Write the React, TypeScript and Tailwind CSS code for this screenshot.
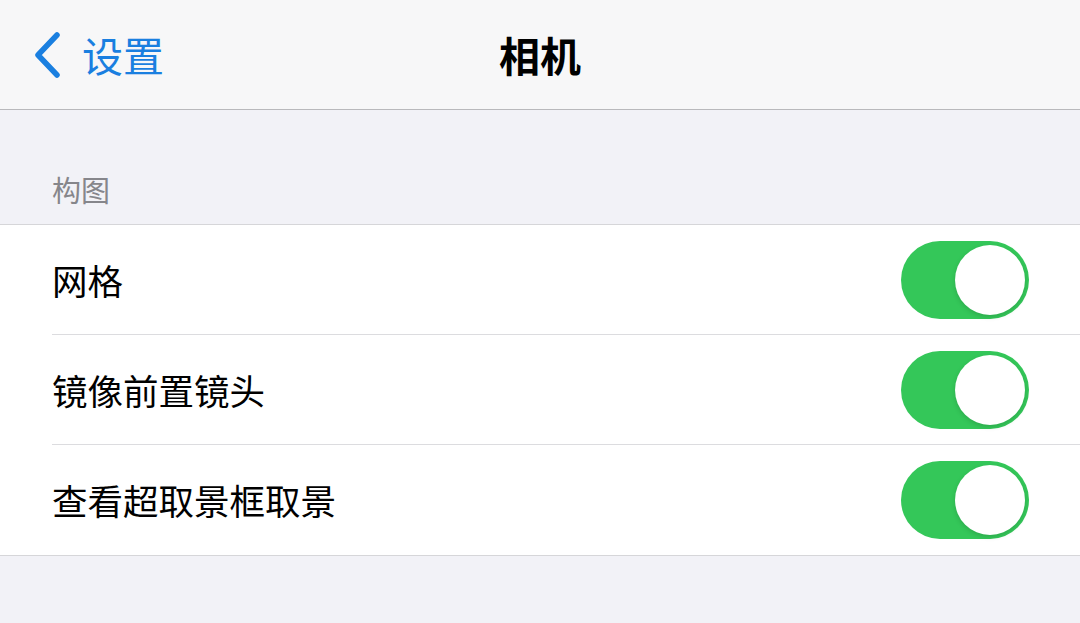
import React from 'react';

const Toggle = () => (
  <div className="w-[128px] h-[78px] rounded-full bg-[#34c759] p-[4px] flex justify-end items-center">
    <div className="w-[70px] h-[70px] rounded-full bg-white shadow-[0_2px_5px_rgba(0,0,0,0.15)]" />
  </div>
);

const rows = ['网格', '镜像前置镜头', '查看超取景框取景'];

const App = () => {
  return (
    <div
      className="w-[1080px] h-[623px] bg-[#f2f2f7] overflow-hidden"
      style={{ fontFamily: '"Noto Sans CJK SC", "Noto Sans", sans-serif' }}
    >
      {/* Nav bar */}
      <div className="relative h-[110px] bg-[#f7f7f8] border-b border-[#b9b9bc] flex items-center">
        <div className="flex items-center pl-[33px] text-[#1a7fe0]">
          <svg width="28" height="46" viewBox="0 0 28 46" fill="none">
            <path d="M24 3 L5 23 L24 43" stroke="currentColor" strokeWidth="5.5" strokeLinecap="round" strokeLinejoin="round" />
          </svg>
          <span className="ml-[21px] text-[41px] leading-none">设置</span>
        </div>
        <div className="absolute inset-x-0 text-center text-[41px] font-bold text-black leading-none">相机</div>
      </div>

      {/* Section header */}
      <div className="h-[114px] flex items-end pb-[20px] pl-[52px] text-[29px] text-[#86868b] leading-none">构图</div>

      {/* Group */}
      <div className="bg-white border-y border-[#d6d6d9]">
        {rows.map((label, i) => (
          <div key={label} className="pl-[52px]">
            <div
              className={`h-[110px] flex items-center justify-between pr-[51px] ${
                i < rows.length - 1 ? 'border-b border-[#dcdcdf]' : ''
              }`}
            >
              <span className="text-[35.5px] text-black leading-none">{label}</span>
              <Toggle />
            </div>
          </div>
        ))}
      </div>
    </div>
  );
};

export default App;
